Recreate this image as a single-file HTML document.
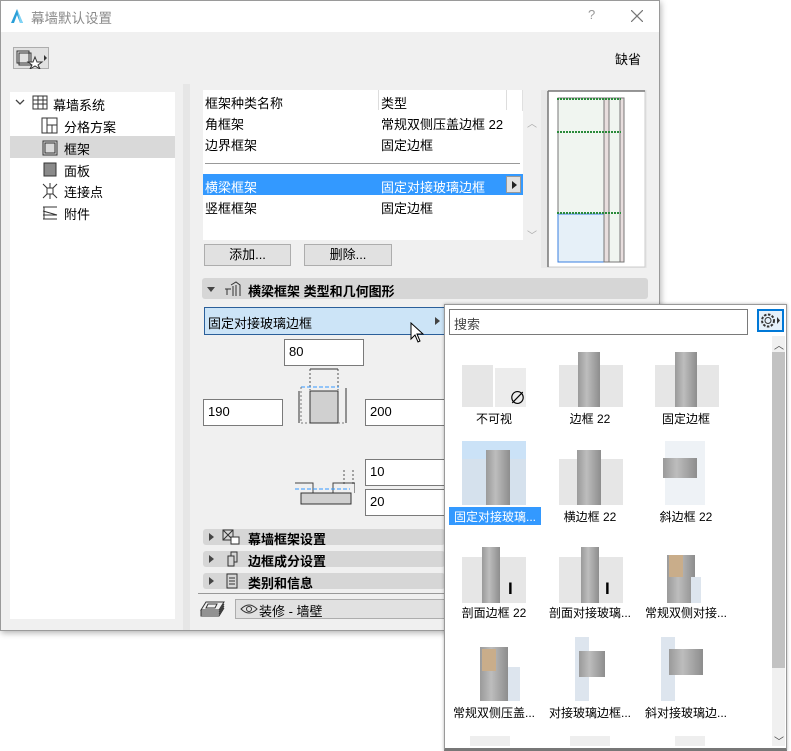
<!DOCTYPE html>
<html><head><meta charset="utf-8"><style>
*{box-sizing:border-box;margin:0;padding:0}
body{width:791px;height:751px;background:#fff;position:relative;overflow:hidden;font-family:"Liberation Sans","Noto Sans CJK SC",sans-serif;font-size:12px;color:#000}
path{fill:none}
.a{position:absolute}
.dlg{left:0;top:0;width:660px;height:631px;background:#f0f0f0;border:1px solid #9a9a9a;box-shadow:1px 2px 6px rgba(0,0,0,.3)}
.inp{position:absolute;background:#fff;border:1px solid #7a7a7a;padding:4px 4px;font-size:13px;line-height:16px}
.sec{position:absolute;left:202px;width:242px;height:16px;background:#d6d6d6;border-radius:3px;font-weight:bold;font-size:12.5px;line-height:16px}
.tri{position:absolute;width:0;height:0;border-top:4px solid transparent;border-bottom:4px solid transparent;border-left:5px solid #444}
.it{position:absolute;width:96px;text-align:center;font-size:12px}
.th{position:absolute;width:64px;height:64px;overflow:hidden}
.gl{position:absolute;background:#e6e6e6}
.bar{position:absolute;background:linear-gradient(90deg,#9a9a9a,#bdbdbd 40%,#8d8d8d)}
</style></head><body>
<div class="a dlg">
 <div class="a" style="left:0;top:0;width:658px;height:31px;background:#fff"></div>
 <svg class="a" style="left:9px;top:7px" width="14" height="16"><polygon points="1,15 7,1 13,15 10,15 7,7 4,15" fill="#2a9fd8"/><polygon points="7,1 13,15 10,15" fill="#7fd3f5"/></svg>
 <div class="a" style="left:30px;top:6px;font-size:13.5px;color:#8a8a8a">幕墙默认设置</div>
 <div class="a" style="left:587px;top:6px;font-size:13px;color:#999">?</div>
 <svg class="a" style="left:630px;top:9px" width="12" height="12"><path d="M0,0L12,12M12,0L0,12" stroke="#777" stroke-width="1.2"/></svg>
 <div class="a" style="left:12px;top:46px;width:36px;height:22px;background:#e1e1e1;border:1px solid #adadad"></div>
 <svg class="a" style="left:15px;top:48px" width="32" height="20"><rect x="1" y="2" width="12" height="12" fill="none" stroke="#333"/><rect x="3" y="4" width="12" height="12" fill="none" stroke="#333"/><polygon points="19,8 21,13 26,13 22,16 24,20 19,17 14,20 16,16 12,13 17,13" fill="#fff" stroke="#333"/><polygon points="28,6 31,9 28,12" fill="#333"/></svg>
 <div class="a" style="left:614px;top:48px;font-size:13px">缺省</div>
 <div class="a" style="left:9px;top:91px;width:165px;height:527px;background:#fff"></div>
 <div class="a" style="left:9px;top:135px;width:165px;height:22px;background:#d9d9d9"></div>
 <svg class="a" style="left:14px;top:97px" width="10" height="8"><path d="M1,2L5,6L9,2" stroke="#444" stroke-width="1.3"/></svg>
 <svg class="a" style="left:30px;top:94px" width="18" height="16"><path d="M2,1h14v13H2zM2,5h14M2,9h14M7,1v13M12,1v13" stroke="#333"/></svg>
 <div class="a" style="left:52px;top:94px;font-size:13px">幕墙系统</div>
 <svg class="a" style="left:40px;top:116px" width="18" height="18"><path d="M1,1h15v15H1zM6,1v15M6,8h10M11,8v8" stroke="#333"/></svg>
 <div class="a" style="left:63px;top:116px;font-size:13px">分格方案</div>
 <svg class="a" style="left:40px;top:138px" width="18" height="18"><path d="M2,2h14v14H2zM4,4h10v10H4z" stroke="#333"/></svg>
 <div class="a" style="left:63px;top:138px;font-size:13px">框架</div>
 <svg class="a" style="left:40px;top:160px" width="18" height="18"><rect x="3" y="2" width="12" height="13" fill="#8a8a8a" stroke="#333"/></svg>
 <div class="a" style="left:63px;top:160px;font-size:13px">面板</div>
 <svg class="a" style="left:40px;top:181px" width="18" height="18"><path d="M2,2L16,16M16,2L2,16M9,1v5M9,12v5" stroke="#333"/><rect x="6" y="6" width="6" height="6" fill="#fff" stroke="#333"/></svg>
 <div class="a" style="left:63px;top:181px;font-size:13px">连接点</div>
 <svg class="a" style="left:40px;top:203px" width="18" height="18"><path d="M2,3h14M2,7l14,4M2,11h14M2,15h14M3,3v12" stroke="#333"/></svg>
 <div class="a" style="left:63px;top:203px;font-size:13px">附件</div>

 <div class="a" style="left:182px;top:83px;width:7px;height:546px;background:#e6e6e6"></div>
 <div class="a" style="left:202px;top:89px;width:320px;height:150px;background:#fff"></div>
 <div class="a" style="left:202px;top:89px;width:320px;height:21px;background:#fff;border-right:1px solid #e0e0e0"></div>
 <div class="a" style="left:377px;top:89px;width:1px;height:20px;background:#ddd"></div>
 <div class="a" style="left:505px;top:89px;width:1px;height:20px;background:#ddd"></div>
 <div class="a" style="left:204px;top:92px;font-size:13px">框架种类名称</div><div class="a" style="left:380px;top:92px;font-size:13px">类型</div>
 <div class="a" style="left:204px;top:113px;font-size:13px">角框架</div><div class="a" style="left:380px;top:113px;font-size:13px">常规双侧压盖边框 22</div>
 <div class="a" style="left:204px;top:134px;font-size:13px">边界框架</div><div class="a" style="left:380px;top:134px;font-size:13px">固定边框</div>
 <div class="a" style="left:204px;top:162px;width:315px;height:1px;background:#999"></div>
 <div class="a" style="left:202px;top:173px;width:320px;height:21px;background:#3399ff"></div>
 <div class="a" style="left:204px;top:176px;font-size:13px;color:#fff">横梁框架</div><div class="a" style="left:380px;top:176px;font-size:13px;color:#fff">固定对接玻璃边框</div>
 <div class="a" style="left:505px;top:175px;width:15px;height:17px;background:#e1e1e1;border:1px solid #999"></div>
 <div class="tri" style="left:511px;top:180px;border-left-color:#222"></div>
 <div class="a" style="left:204px;top:197px;font-size:13px">竖框框架</div><div class="a" style="left:380px;top:197px;font-size:13px">固定边框</div>
 <div class="a" style="left:526px;top:114px;font-size:10px;color:#aaa">︿</div>
 <div class="a" style="left:526px;top:226px;font-size:10px;color:#aaa">﹀</div>
 <div class="a" style="left:540px;top:89px;width:106px;height:178px;background:#e8e8e8"></div>
 <svg class="a" style="left:546px;top:89px" width="100" height="178"><rect x="1" y="1" width="97" height="176" fill="#fff" stroke="#ccc"/><path d="M1,1h97M1,1v176" stroke="#777" stroke-width="1.5"/><rect x="11" y="8" width="46" height="164" fill="#f0f5f0" stroke="#777"/><rect x="11" y="124" width="46" height="48" fill="#e6f0f8" stroke="#3a7fe0"/><rect x="57" y="8" width="5" height="164" fill="#e8dede" stroke="#777"/><rect x="62" y="8" width="11" height="164" fill="#f0f5f0" stroke="#777"/><rect x="73" y="8" width="4" height="164" fill="#e8dede" stroke="#777"/><path d="M10,9h64M10,42h64M10,123h64" stroke="#2a8a3a" stroke-dasharray="2,1" stroke-width="2"/></svg>
 <div class="a" style="left:203px;top:243px;width:87px;height:22px;background:#e1e1e1;border:1px solid #adadad;text-align:center;line-height:20px;font-size:13px">添加...</div>
 <div class="a" style="left:303px;top:243px;width:88px;height:22px;background:#e1e1e1;border:1px solid #adadad;text-align:center;line-height:20px;font-size:13px">删除...</div>
 <div class="a" style="left:201px;top:277px;width:446px;height:21px;background:#d6d6d6;border-radius:3px"></div>
 <div class="a" style="left:206px;top:286px;border-left:4px solid transparent;border-right:4px solid transparent;border-top:5px solid #444;width:0;height:0"></div>
 <svg class="a" style="left:222px;top:280px" width="18" height="16"><path d="M2,8h6M4,8v6M8,4l5-3l4,3v11M10,5v10M13,4v11" stroke="#333"/></svg>
 <div class="a" style="left:247px;top:280px;font-size:13px;font-weight:bold">横梁框架 类型和几何图形</div>
 <div class="a" style="left:203px;top:306px;width:241px;height:28px;background:#cce4f7;border:1px solid #2b5f9a"></div>
 <div class="a" style="left:207px;top:312px;font-size:13px">固定对接玻璃边框</div>
 <div class="tri" style="left:434px;top:316px"></div>
 <svg class="a" style="left:409px;top:321px" width="14" height="22"><path d="M1,1v16l4,-4l3,7l2,-1l-3,-7h6z" style="fill:#fff" stroke="#000"/></svg>
 <div class="inp" style="left:283px;top:338px;width:80px;height:27px">80</div>
 <div class="inp" style="left:202px;top:398px;width:80px;height:27px">190</div>
 <div class="inp" style="left:364px;top:398px;width:80px;height:27px">200</div>
 <div class="inp" style="left:364px;top:458px;width:80px;height:27px">10</div>
 <div class="inp" style="left:364px;top:488px;width:80px;height:27px">20</div>
 <svg class="a" style="left:290px;top:365px" width="60" height="60"><path d="M19,3v21M47,3v21" stroke="#555" stroke-dasharray="2,2"/><path d="M19,3h28" stroke="#333"/><path d="M10,21h38" stroke="#39f" stroke-dasharray="4,2"/><rect x="19" y="25" width="28" height="32" fill="#d0d0d0" stroke="#333"/><path d="M8,25v32M55,22v35" stroke="#333"/><path d="M10,21v36h9M47,57h7" stroke="#777" stroke-dasharray="2,2"/></svg>
 <svg class="a" style="left:294px;top:465px" width="60" height="40"><path d="M49,4v16M58,4v16" stroke="#555" stroke-dasharray="2,2"/><path d="M-2,17h20v10M38,27v-10h22" stroke="#444"/><path d="M0,23h55" stroke="#39f" stroke-dasharray="4,2"/><rect x="6" y="27" width="50" height="11" fill="#d0d0d0" stroke="#333"/><path d="M60,17v10" stroke="#333"/></svg>
 <div class="sec" style="top:528px"></div><div class="sec" style="top:550px"></div><div class="sec" style="top:572px"></div>
 <div class="tri" style="left:208px;top:532px"></div><div class="tri" style="left:208px;top:554px"></div><div class="tri" style="left:208px;top:576px"></div>
 <svg class="a" style="left:221px;top:528px" width="18" height="16"><path d="M1,1h10v10H1zM1,1l10,10M11,1L1,11" stroke="#333"/><rect x="9" y="8" width="8" height="7" fill="#fff" stroke="#333"/></svg>
 <svg class="a" style="left:225px;top:550px" width="14" height="16"><path d="M2,5h6v10H2zM5,5V1h6v10H8" stroke="#333"/></svg>
 <svg class="a" style="left:224px;top:572px" width="14" height="16"><path d="M2,1h10v14H2zM4,5h6M4,8h6M4,11h6" stroke="#333"/></svg>
 <div class="a" style="left:247px;top:528px;font-size:13px;font-weight:bold">幕墙框架设置</div>
 <div class="a" style="left:247px;top:550px;font-size:13px;font-weight:bold">边框成分设置</div>
 <div class="a" style="left:247px;top:572px;font-size:13px;font-weight:bold">类别和信息</div>
 <div class="a" style="left:197px;top:592px;width:460px;height:1px;background:#999"></div>
 <svg class="a" style="left:199px;top:600px" width="26" height="16"><path d="M6,1h18l-5,8H1zM1,9v2h18l5-8M1,11v2h18l5-8M1,13v2h18l5-8M8,3h9l-2,4H6z" stroke="#333"/></svg>
 <div class="a" style="left:234px;top:598px;width:220px;height:20px;background:#e1e1e1;border:1px solid #adadad"></div>
 <svg class="a" style="left:239px;top:602px" width="18" height="12"><path d="M1,6Q9,-2 17,6Q9,14 1,6z" stroke="#333"/><circle cx="9" cy="6" r="2.5" fill="none" stroke="#333"/></svg>
 <div class="a" style="left:258px;top:600px;font-size:13px">装修 - 墙壁</div>
</div>

<div class="a" style="left:444px;top:304px;width:343px;height:447px;background:#fff;border:1px solid #999;box-shadow:0 0 3px rgba(0,0,0,.3);border-bottom:3px solid #777"></div>
<div class="a" style="left:449px;top:309px;width:299px;height:26px;border:1px solid #7a7a7a;background:#fff;font-size:13px;padding:4px;color:#444">搜索</div>
<div class="a" style="left:757px;top:309px;width:27px;height:23px;border:2px solid #0078d7;background:#e5f1fb"></div>
<svg class="a" style="left:760px;top:312px" width="22" height="17"><circle cx="8" cy="8.5" r="3" fill="none" stroke="#333"/><circle cx="8" cy="8.5" r="6" fill="none" stroke="#333" stroke-dasharray="2.5,1.5" stroke-width="2"/><polygon points="17,5 20,8.5 17,12" fill="#333"/></svg>
<div class="a" style="left:772px;top:336px;width:13px;height:410px;background:#f0f0f0"></div>
<div class="a" style="left:772px;top:352px;width:13px;height:316px;background:#c2c2c2"></div>
<div class="a" style="left:774px;top:337px;font-size:10px;color:#444">︿</div>
<div class="a" style="left:774px;top:733px;font-size:10px;color:#444">﹀</div>

<div class="th" style="left:462px;top:350px;height:57px"><div class="gl" style="left:0;top:15px;width:31px;height:42px"></div><div class="gl" style="left:33px;top:18px;width:31px;height:39px;background:#ececec"></div><div class="a" style="left:47px;top:34px;font-size:17px">∅</div></div>
<div class="th" style="left:559px;top:350px;height:57px"><div class="gl" style="left:0;top:15px;width:64px;height:42px"></div><div class="bar" style="left:19px;top:2px;width:22px;height:55px"></div></div>
<div class="th" style="left:655px;top:350px;height:57px"><div class="gl" style="left:0;top:15px;width:64px;height:42px"></div><div class="bar" style="left:20px;top:2px;width:22px;height:55px"></div></div>
<div class="it" style="left:446px;top:410px">不可视</div>
<div class="it" style="left:542px;top:410px">边框 22</div>
<div class="it" style="left:638px;top:410px">固定边框</div>
<div class="th" style="left:462px;top:441px"><div class="a" style="left:0;top:0;width:64px;height:64px;background:#cbe2f7"></div><div class="gl" style="left:0;top:18px;width:64px;height:46px;background:rgba(220,225,230,.6)"></div><div class="bar" style="left:24px;top:9px;width:24px;height:55px"></div></div>
<div class="th" style="left:559px;top:441px"><div class="gl" style="left:0;top:18px;width:64px;height:46px"></div><div class="bar" style="left:18px;top:9px;width:24px;height:55px"></div></div>
<div class="th" style="left:655px;top:441px"><div class="gl" style="left:10px;top:0;width:40px;height:64px;background:#eef2f6"></div><div class="bar" style="left:8px;top:17px;width:34px;height:20px"></div></div>
<div class="a" style="left:449px;top:507px;width:92px;height:18px;background:#3399ff"></div>
<div class="it" style="left:447px;top:508px;width:96px;color:#fff">固定对接玻璃...</div>
<div class="it" style="left:542px;top:508px">横边框 22</div>
<div class="it" style="left:638px;top:508px">斜边框 22</div>
<div class="th" style="left:462px;top:547px;height:56px"><div class="gl" style="left:0;top:10px;width:64px;height:46px"></div><div class="bar" style="left:20px;top:0;width:18px;height:56px"></div><div class="a" style="left:46px;top:32px;font-size:17px;font-weight:bold">I</div></div>
<div class="th" style="left:559px;top:547px;height:56px"><div class="gl" style="left:0;top:10px;width:64px;height:46px"></div><div class="bar" style="left:22px;top:0;width:18px;height:56px"></div><div class="a" style="left:46px;top:32px;font-size:17px;font-weight:bold">I</div></div>
<div class="th" style="left:655px;top:547px;height:56px"><div class="bar" style="left:12px;top:8px;width:28px;height:48px"></div><div class="a" style="left:14px;top:8px;width:14px;height:22px;background:#c9ad8a"></div><div class="gl" style="left:36px;top:30px;width:10px;height:26px;background:#dde5ee"></div></div>
<div class="it" style="left:446px;top:604px">剖面边框 22</div>
<div class="it" style="left:542px;top:604px">剖面对接玻璃...</div>
<div class="it" style="left:638px;top:604px">常规双侧对接...</div>
<div class="th" style="left:462px;top:637px"><div class="bar" style="left:18px;top:10px;width:28px;height:54px"></div><div class="a" style="left:20px;top:12px;width:14px;height:22px;background:#c9ad8a"></div><div class="gl" style="left:46px;top:30px;width:12px;height:34px;background:#dde5ee"></div></div>
<div class="th" style="left:559px;top:637px"><div class="gl" style="left:16px;top:0;width:14px;height:64px;background:#dde5ee"></div><div class="bar" style="left:20px;top:14px;width:26px;height:26px"></div></div>
<div class="th" style="left:655px;top:637px"><div class="gl" style="left:6px;top:0;width:14px;height:64px;background:#dde5ee"></div><div class="bar" style="left:14px;top:12px;width:34px;height:26px"></div></div>
<div class="it" style="left:446px;top:704px">常规双侧压盖...</div>
<div class="it" style="left:542px;top:704px">对接玻璃边框...</div>
<div class="it" style="left:638px;top:704px">斜对接玻璃边...</div>
<div class="gl" style="left:470px;top:736px;width:40px;height:10px;background:#eee"></div>
<div class="gl" style="left:570px;top:736px;width:40px;height:10px;background:#eee"></div>
<div class="gl" style="left:675px;top:736px;width:30px;height:10px;background:#eee"></div>
</body></html>
